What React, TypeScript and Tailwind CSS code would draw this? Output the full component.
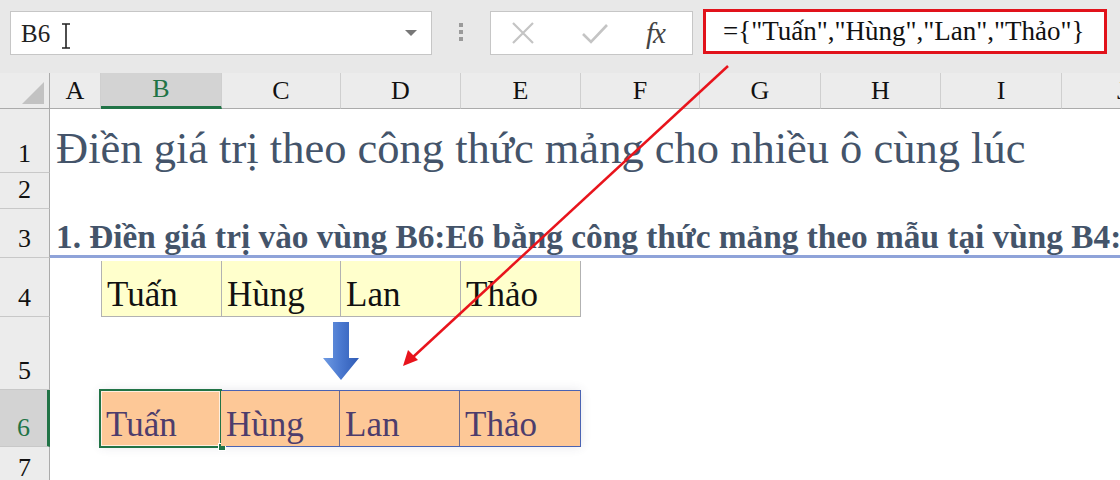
import React from "react";

const COLS: { l: string; w: number }[] = [
  { l: "A", w: 51 },
  { l: "B", w: 121 },
  { l: "C", w: 119 },
  { l: "D", w: 120 },
  { l: "E", w: 120 },
  { l: "F", w: 119 },
  { l: "G", w: 121 },
  { l: "H", w: 120 },
  { l: "I", w: 121 },
  { l: "J", w: 121 },
];

function RowHead({ n, h, sel }: { n: string; h: number; sel?: boolean }) {
  return (
    <div
      className={
        "w-[50px] shrink-0 flex items-end justify-center pb-[5px] text-[26px] leading-none border-b border-[#c8c8c8] " +
        (sel
          ? "bg-[#d3d3d3] text-[#217346] border-r-[3px] border-r-[#217346]"
          : "bg-[#ececec] text-[#111] border-r border-r-[#ababab]")
      }
      style={{ height: h }}
    >
      {n}
    </div>
  );
}

const NAMES = ["Tuấn", "Hùng", "Lan", "Thảo"];

export default function App() {
  return (
    <div className="relative w-[1120px] h-[480px] overflow-hidden bg-white font-['Liberation_Serif','Times_New_Roman','DejaVu_Serif',serif]">
      {/* Toolbar */}
      <div className="h-[73px] bg-[#e8e8e8] flex items-start pt-[10px] pl-[10px]">
        <div className="relative w-[422px] h-[44px] mt-[1px] bg-white border border-[#c6c6c6] flex items-center pl-[10px]">
          <span className="text-[25px] text-[#222] leading-none">B6</span>
          <svg width="12" height="26" viewBox="0 0 12 26" className="ml-[10px] mt-[6px]">
            <path d="M2 1 H10 M6 1 V25 M2 25 H10" stroke="#222" strokeWidth="1.6" fill="none" />
          </svg>
          <div className="ml-auto mr-[14px] w-0 h-0 border-l-[6px] border-r-[6px] border-t-[6px] border-l-transparent border-r-transparent border-t-[#777]" />
        </div>
        <div className="w-[58px] h-[44px] flex flex-col items-center justify-center gap-[3px]">
          <div className="w-[4px] h-[4px] bg-[#9a9a9a]" />
          <div className="w-[4px] h-[4px] bg-[#9a9a9a]" />
          <div className="w-[4px] h-[4px] bg-[#9a9a9a]" />
        </div>
        <div className="w-[203px] h-[44px] mt-[1px] bg-white border border-[#c6c6c6] flex items-center">
          <svg width="26" height="26" viewBox="0 0 26 26" className="ml-[19px]">
            <path d="M3 3 L23 23 M23 3 L3 23" stroke="#c4c4c4" strokeWidth="2.2" fill="none" />
          </svg>
          <svg width="30" height="26" viewBox="0 0 30 26" className="ml-[44px]">
            <path d="M3 14 L11 22 L27 5" stroke="#c4c4c4" strokeWidth="2.6" fill="none" />
          </svg>
          <span className="ml-[36px] text-[29px] italic text-[#444] leading-none tracking-[-1px]">fx</span>
        </div>
        <div className="ml-[10px] w-[404px] h-[45px] -mt-[1px] bg-white border-[3px] border-[#e1121b] flex items-center pl-[17px]">
          <span className="text-[27px] leading-none text-[#111] whitespace-nowrap">
            ={"{"}"Tuấn","Hùng","Lan","Thảo"{"}"}
          </span>
        </div>
      </div>

      {/* Column headers */}
      <div className="flex h-[36px]">
        <div className="w-[50px] shrink-0 bg-[#ececec] border-r border-r-[#ababab] border-b border-b-[#ababab] relative">
          <svg className="absolute right-[5px] bottom-[4px]" width="22" height="22" viewBox="0 0 22 22">
            <polygon points="22,0 22,22 0,22" fill="#c2c2c2" />
          </svg>
        </div>
        {COLS.map((c) => (
          <div
            key={c.l}
            className={
              "shrink-0 flex items-end justify-center pb-[4px] text-[26px] leading-none border-r border-r-[#cfcfcf] " +
              (c.l === "B"
                ? "bg-[#d3d3d3] text-[#217346] border-b-[3px] border-b-[#217346]"
                : "bg-[#ececec] text-[#111] border-b border-b-[#ababab]")
            }
            style={{ width: c.w }}
          >
            {c.l}
          </div>
        ))}
      </div>

      {/* Row 1 */}
      <div className="flex">
        <RowHead n="1" h={64} />
        <div className="flex-1 h-[64px] flex items-end pl-[6px] pb-[3px]">
          <span className="text-[44.5px] leading-none text-[#44546a] whitespace-nowrap">
            Điền giá trị theo công thức mảng cho nhiều ô cùng lúc
          </span>
        </div>
      </div>

      {/* Row 2 */}
      <div className="flex">
        <RowHead n="2" h={36} />
        <div className="flex-1" />
      </div>

      {/* Row 3 */}
      <div className="flex">
        <RowHead n="3" h={49} />
        <div className="flex-1 min-w-0 h-[49px] flex items-end pl-[6px] pb-[2px] border-b-[3px] border-b-[#8fa3d9] overflow-hidden">
          <span className="text-[33.3px] font-bold leading-none text-[#44546a] whitespace-nowrap">
            1. Điền giá trị vào vùng B6:E6 bằng công thức mảng theo mẫu tại vùng B4:E4
          </span>
        </div>
      </div>

      {/* Row 4 */}
      <div className="flex">
        <RowHead n="4" h={59} />
        <div className="w-[51px] shrink-0" />
        <div className="flex h-[59px] pt-[3px]">
          {NAMES.map((t, i) => (
            <div
              key={t}
              className={
                "h-[56px] bg-[#ffffcc] border-[#b2b2b2] border-b border-t-0 border-r flex items-end pl-[5px] pb-[4px] " +
                (i === 0 ? "border-l" : "")
              }
              style={{ width: COLS[i + 1].w }}
            >
              <span className="text-[35px] leading-none text-[#111]">{t}</span>
            </div>
          ))}
        </div>
      </div>

      {/* Row 5 */}
      <div className="flex">
        <RowHead n="5" h={73} />
        <div className="flex-1" />
      </div>

      {/* Row 6 */}
      <div className="flex">
        <RowHead n="6" h={57} sel />
        <div className="w-[50px] shrink-0" />
        <div className="flex h-[57px] border-[1.5px] border-[#4a63b3] shadow-[0_0_10px_rgba(60,60,90,0.12)]">
          {NAMES.map((t, i) => (
            <div
              key={t}
              className={
                "relative h-full bg-[#fdc897] flex items-end pl-[5px] pb-[4px] " +
                (i > 0 && i < 3 ? "border-r border-r-[#6f6a8c]" : "")
              }
              style={{ width: COLS[i + 1].w - (i === 0 ? 1 : 0) }}
            >
              {i === 0 && (
                <>
                  <div className="absolute -left-[2px] -top-[2px] -right-[1px] -bottom-[2px] border-[2.5px] border-[#217346] pointer-events-none">
                    <div className="absolute inset-0 border border-white/70" />
                  </div>
                  <div className="absolute -right-[5px] -bottom-[5px] w-[8px] h-[8px] bg-[#217346] border border-white" />
                </>
              )}
              <span className="relative text-[35px] leading-none text-[#4d3d6c]">{t}</span>
            </div>
          ))}
        </div>
      </div>

      {/* Row 7 */}
      <div className="flex">
        <RowHead n="7" h={40} />
        <div className="flex-1" />
      </div>

      {/* Blue down arrow shape */}
      <svg className="absolute left-[321px] top-[321px]" width="40" height="62" viewBox="0 0 40 62">
        <defs>
          <linearGradient id="bl" x1="0" y1="0" x2="1" y2="0">
            <stop offset="0" stopColor="#6f9be3" />
            <stop offset="0.5" stopColor="#4a78cf" />
            <stop offset="1" stopColor="#2f5bb5" />
          </linearGradient>
        </defs>
        <polygon points="12,1 28,1 28,37 38,37 20,59 2,37 12,37" fill="url(#bl)" />
      </svg>

      {/* Red annotation arrow */}
      <svg className="absolute left-0 top-0 pointer-events-none" width="1120" height="480" viewBox="0 0 1120 480">
        <line x1="728" y1="66" x2="412" y2="358" stroke="#e8141c" strokeWidth="2.5" />
        <polygon points="403,366 408,350 418,360" fill="#e8141c" />
      </svg>
    </div>
  );
}
